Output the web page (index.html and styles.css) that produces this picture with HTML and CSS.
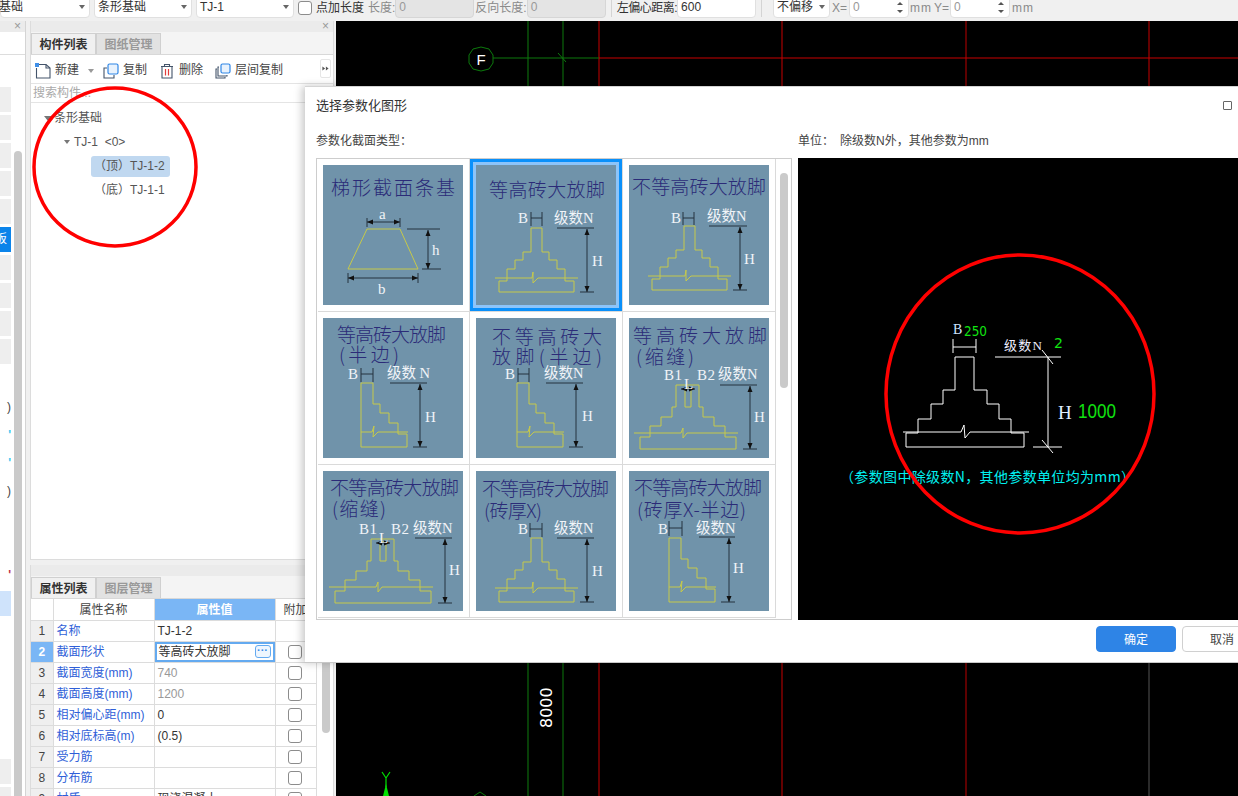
FILE: index.html
```html
<!DOCTYPE html>
<html lang="zh-CN">
<head>
<meta charset="utf-8">
<title>选择参数化图形</title>
<link rel="stylesheet" href="styles.css">
</head>
<body>
<svg class="defs" aria-hidden="true">
  <defs>
    <marker id="ar" viewBox="0 0 6 6" refX="6" refY="3" markerWidth="6" markerHeight="6" orient="auto-start-reverse"><path d="M0 0.5L6 3L0 5.5Z" fill="#111"/></marker>
    <g id="foot"><path d="M55 63H66V87H73V95H81V104H89V116H98V127H23V116H31V104H39V95H47V87H55Z"/><path d="M19 113H56L57 107L57 118L62 113H102"/></g>
    <g id="half"><path d="M38 65H50V86H57V95H66V105H75V116H84V129H38Z"/><path d="M38 114H49L51 108L50 119L55 114H85"/></g>
    <g id="slot"><path d="M47 67H70V89H74V99H85V108H96V119H107V131H11V119H21V108H32V99H43V89H47Z"/><path d="M56 70H62V89H56Z"/><path d="M5 115H52L54 110L54 120L58 115H109"/></g>
  </defs>
</svg>

<div class="app">
  <header class="topbar">
    <div class="ctl sel w90 flush"><span class="clipL">基础</span><i class="caret"></i></div>
    <div class="ctl sel w98"><span>条形基础</span><i class="caret"></i></div>
    <div class="ctl sel w98"><span>TJ-1</span><i class="caret"></i></div>
    <span class="check"></span>
    <span class="lbl m4">点加长度</span>
    <span class="lbl dim m4">长度:</span>
    <div class="ctl off w79 m0">0</div>
    <span class="lbl dim m1">反向长度:</span>
    <div class="ctl off w79 m0">0</div>
    <span class="sep"></span>
    <span class="lbl tight">左偏心距离:</span>
    <div class="ctl on w79 m0">600</div>
    <span class="sep"></span>
    <div class="ctl sel w57 m6"><span>不偏移</span><i class="caret"></i></div>
    <span class="lbl dim m2">X=</span>
    <div class="ctl num w60 m2"><span>0</span><b class="spin"><i class="up"></i><i class="down"></i></b></div>
    <span class="lbl dim m1 mm">mm</span>
    <span class="lbl dim m2">Y=</span>
    <div class="ctl num w60 m1"><span>0</span><b class="spin"><i class="up"></i><i class="down"></i></b></div>
    <span class="lbl dim m2 mm">mm</span>
  </header>

  <div class="main">
    <aside class="side">
      <div class="strip"><span class="close">×</span></div>
      <div class="side-top"></div>
      <div class="side-body">
        <ul class="side-list">
          <li class="g"></li><li class="g"></li><li class="g"></li><li class="g"></li><li class="g"></li>
          <li class="b">板</li>
          <li class="g"></li><li class="g"></li><li class="g"></li><li class="g"></li>
          <li></li><li>)</li><li class="c">'</li><li class="c">'</li><li>)</li><li></li><li></li>
          <li class="r">'</li><li class="s"></li>
          <li></li><li></li><li></li><li></li><li></li>
          <li class="g"></li><li class="g"></li>
        </ul>
        <div class="side-scroll"></div>
      </div>
    </aside>

    <div class="panels">
      <section class="panel list-panel">
        <div class="strip"><span class="close">×</span></div>
        <div class="tabs"><span class="tab on">构件列表</span><span class="tab">图纸管理</span></div>
        <div class="tools">
          <span class="tool first">
            <svg class="ico" viewBox="0 0 16 16"><path d="M4 1.5H11L15 5V15H1.5V5" class="ln"/><path d="M11 1.5V5H15" class="ln"/><rect x="0" y="0" width="4" height="4" fill="#3f8fe8"/></svg>
            新建<i class="caret small"></i>
          </span>
          <span class="tool">
            <svg class="ico" viewBox="0 0 16 16"><path d="M4 5H1V15H11V12" class="ln"/><rect x="5" y="1" width="10" height="10" rx="1.5" fill="#e8f2fd" stroke="#2f86e6" stroke-width="1.2"/></svg>
            复制
          </span>
          <span class="tool">
            <svg class="ico" viewBox="0 0 16 16"><path d="M2 3.5H14M5.5 3.5V1.5H10.500V3.500M3 3.5V15H13V3.5" class="ln"/><path d="M6.500 6V12.500M9.500 6V12.500" stroke="#e23b3b" stroke-width="1.200" fill="none"/></svg>
            删除
          </span>
          <span class="tool">
            <svg class="ico" viewBox="0 0 16 16"><path d="M2 6H1V15H10V14M4 4H3V13H12V12" class="ln"/><rect x="6" y="1" width="9" height="9" rx="1.500" fill="#e8f2fd" stroke="#2f86e6" stroke-width="1.200"/></svg>
            层间复制
          </span>
          <span class="more"><svg viewBox="0 0 9 6"><path d="M0.500 0.500L4 3L0.500 5.500ZM5 0.500L8.500 3L5 5.500Z" fill="#555"/></svg></span>
        </div>
        <div class="search">搜索构件...</div>
        <ul class="tree">
          <li class="lv0"><i class="tri"></i>条形基础</li>
          <li class="lv1"><i class="tri"></i>TJ-1&nbsp;&nbsp;&lt;0&gt;</li>
          <li class="lv2"><span class="node cur">（顶）TJ-1-2</span></li>
          <li class="lv2"><span class="node">（底）TJ-1-1</span></li>
        </ul>
      </section>

      <section class="panel prop-panel">
        <div class="strip"></div>
        <div class="tabs"><span class="tab on">属性列表</span><span class="tab">图层管理</span></div>
        <div class="prop-body">
          <table class="props">
            <colgroup><col class="c0"><col class="c1"><col class="c2"><col class="c3"></colgroup>
            <tr><th></th><th>属性名称</th><th class="hl">属性值</th><th>附加</th></tr>
            <tr><td class="n">1</td><td class="k">名称</td><td>TJ-1-2</td><td></td></tr>
            <tr><td class="n hl">2</td><td class="k">截面形状</td><td class="edit"><span>等高砖大放脚</span><em>···</em></td><td class="x"><span class="check"></span></td></tr>
            <tr><td class="n">3</td><td class="k">截面宽度(mm)</td><td class="g">740</td><td class="x"><span class="check"></span></td></tr>
            <tr><td class="n">4</td><td class="k">截面高度(mm)</td><td class="g">1200</td><td class="x"><span class="check"></span></td></tr>
            <tr><td class="n">5</td><td class="k">相对偏心距(mm)</td><td>0</td><td class="x"><span class="check"></span></td></tr>
            <tr><td class="n">6</td><td class="k">相对底标高(m)</td><td>(0.5)</td><td class="x"><span class="check"></span></td></tr>
            <tr><td class="n">7</td><td class="k">受力筋</td><td></td><td class="x"><span class="check"></span></td></tr>
            <tr><td class="n">8</td><td class="k">分布筋</td><td></td><td class="x"><span class="check"></span></td></tr>
            <tr><td class="n">9</td><td class="k">材质</td><td>现浇混凝土</td><td class="x"><span class="check"></span></td></tr>
          </table>
          <div class="prop-scroll"></div>
        </div>
      </section>
    </div>

    <div class="canvas">
      <svg class="cad" viewBox="0 0 902 775">
        <path class="dg" d="M192 0V775"/><path class="g2" d="M227 0V775"/>
        <path class="r1" d="M263 0V775M446 0V775M813 0V65"/><path class="r2" d="M630 0V775"/><path class="gy" d="M813 642V775"/>
        <path class="g2" d="M157 37H263M222 32L230 41"/><path class="r1" d="M263 37H902"/>
        <path class="circ" d="M145 26L153 28L157 34V42L153 48L145 50L137 48L133 42V34L137 28Z"/>
        <text class="f" x="145" y="44">F</text>
        <text class="dimtxt" transform="translate(216 707) rotate(-90)">8000</text>
        <path class="axis" d="M46 751L50 757L54 751M50 757V766"/><path class="axfill" d="M47 775L50 763L53 775Z"/>
        <path class="circ" d="M138 775L144 771L150 775"/>
      </svg>
    </div>
  </div>
</div>

<div class="dialog">
  <div class="dlg-title"><span>选择参数化图形</span><i class="max"></i></div>
  <div class="dlg-labels">
    <span class="lab1">参数化截面类型：</span>
    <span class="lab2">单位：</span><span>除级数N外，其他参数为mm</span>
  </div>
  <div class="dlg-body">
    <div class="gallery">
      <div class="cells">
        <div class="cell">
          <svg class="thumb" viewBox="0 0 140 140">
            <text class="tt" x="8" y="30" textLength="124">梯形截面条基</text>
            <path class="yl" d="M44 64H77L95 104H25Z"/>
            <path class="dm" d="M44 53V62M77 53V62M25 108V118M95 108V118M84 64H117M99 104H118"/>
            <path class="dm" d="M44 57H77" marker-start="url(#ar)" marker-end="url(#ar)"/>
            <path class="dm" d="M25 113H95" marker-start="url(#ar)" marker-end="url(#ar)"/>
            <path class="dm" d="M105 65V104" marker-start="url(#ar)" marker-end="url(#ar)"/>
            <text class="wl" x="56" y="54">a</text><text class="wl" x="109" y="90">h</text><text class="wl" x="55" y="129">b</text>
          </svg>
        </div>
        <div class="cell sel">
          <svg class="thumb" viewBox="0 0 140 140">
            <text class="tt" x="13" y="32" textLength="116">等高砖大放脚</text>
            <use href="#foot" class="yl"/>
            <path class="dm" d="M55 47V61M66 47V61M55 53H66M81 63H118M104 127H118"/>
            <path class="dm" d="M111 64V127" marker-start="url(#ar)" marker-end="url(#ar)"/>
            <text class="wl" x="42" y="58">B</text><text class="wl s" x="78" y="58">级数N</text><text class="wl" x="116" y="101">H</text>
          </svg>
        </div>
        <div class="cell">
          <svg class="thumb" viewBox="0 0 140 140">
            <text class="tt" x="3" y="29" textLength="134">不等高砖大放脚</text>
            <use href="#foot" class="yl" transform="translate(0 -2)"/>
            <path class="dm" d="M54 47V60M65 47V60M54 53H65M80 61H118M104 125H118"/>
            <path class="dm" d="M111 62V125" marker-start="url(#ar)" marker-end="url(#ar)"/>
            <text class="wl" x="42" y="58">B</text><text class="wl s" x="78" y="56">级数N</text><text class="wl" x="115" y="99">H</text>
          </svg>
        </div>
        <div class="cell">
          <svg class="thumb" viewBox="0 0 140 140">
            <text class="tt" x="14" y="24" textLength="109">等高砖大放脚</text>
            <text class="tt" x="16" y="44" textLength="60">(半边)</text>
            <use href="#half" class="yl"/>
            <path class="dm" d="M38 50V64M50 50V64M38 56H50M67 65H104M90 129H104"/>
            <path class="dm" d="M97 66V129" marker-start="url(#ar)" marker-end="url(#ar)"/>
            <text class="wl" x="25" y="61">B</text><text class="wl s" x="64" y="60">级数 N</text><text class="wl" x="102" y="104">H</text>
          </svg>
        </div>
        <div class="cell">
          <svg class="thumb" viewBox="0 0 140 140">
            <text class="tt" x="16" y="26" textLength="110">不等高砖大</text>
            <text class="tt" x="16" y="46" textLength="110">放脚(半边)</text>
            <use href="#half" class="yl" transform="translate(3 0)"/>
            <path class="dm" d="M42 50V64M53 50V64M42 56H53M70 65H107M93 129H107"/>
            <path class="dm" d="M100 66V129" marker-start="url(#ar)" marker-end="url(#ar)"/>
            <text class="wl" x="29" y="61">B</text><text class="wl s" x="68" y="60">级数N</text><text class="wl" x="106" y="103">H</text>
          </svg>
        </div>
        <div class="cell">
          <svg class="thumb" viewBox="0 0 140 140">
            <text class="tt" x="4" y="25" textLength="134">等高砖大放脚</text>
            <text class="tt" x="7" y="46" textLength="58">(缩缝)</text>
            <use href="#slot" class="yl"/>
            <path class="dm" d="M91 67H128M114 131H128"/>
            <path class="dm" d="M121 68V131" marker-start="url(#ar)" marker-end="url(#ar)"/>
            <path class="dm" d="M52 71H66" marker-start="url(#ar)" marker-end="url(#ar)"/>
            <text class="wl" x="35" y="62" textLength="18">B1</text><text class="wl" x="68" y="62" textLength="18">B2</text><text class="wl s" x="89" y="61">级数N</text><text class="wl" x="125" y="104">H</text><text class="wl" x="55" y="71">L</text>
          </svg>
        </div>
        <div class="cell">
          <svg class="thumb" viewBox="0 0 140 140">
            <text class="tt" x="7" y="24" textLength="129">不等高砖大放脚</text>
            <text class="tt" x="9" y="45" textLength="54">(缩缝)</text>
            <use href="#slot" class="yl" transform="translate(1 1)"/>
            <path class="dm" d="M92 67H129M115 132H129"/>
            <path class="dm" d="M122 68V132" marker-start="url(#ar)" marker-end="url(#ar)"/>
            <path class="dm" d="M53 72H67" marker-start="url(#ar)" marker-end="url(#ar)"/>
            <text class="wl" x="36" y="63" textLength="18">B1</text><text class="wl" x="68" y="63" textLength="18">B2</text><text class="wl s" x="90" y="62">级数N</text><text class="wl" x="126" y="104">H</text><text class="wl" x="56" y="72">L</text>
          </svg>
        </div>
        <div class="cell">
          <svg class="thumb" viewBox="0 0 140 140">
            <text class="tt" x="6" y="25" textLength="127">不等高砖大放脚</text>
            <text class="tt" x="8" y="47" textLength="58">(砖厚X)</text>
            <use href="#foot" class="yl" transform="translate(0 4)"/>
            <path class="dm" d="M54 52V66M66 52V66M54 58H66M81 67H118M104 131H118"/>
            <path class="dm" d="M111 68V131" marker-start="url(#ar)" marker-end="url(#ar)"/>
            <text class="wl" x="42" y="63">B</text><text class="wl s" x="78" y="62">级数N</text><text class="wl" x="116" y="105">H</text>
          </svg>
        </div>
        <div class="cell">
          <svg class="thumb" viewBox="0 0 140 140">
            <text class="tt" x="5" y="24" textLength="128">不等高砖大放脚</text>
            <text class="tt" x="8" y="46" textLength="109">(砖厚X-半边)</text>
            <use href="#half" class="yl" transform="translate(2 2)"/>
            <path class="dm" d="M40 50V65M53 50V65M40 57H53M70 66H106M92 131H106"/>
            <path class="dm" d="M100 67V131" marker-start="url(#ar)" marker-end="url(#ar)"/>
            <text class="wl" x="29" y="63">B</text><text class="wl s" x="67" y="62">级数N</text><text class="wl" x="104" y="102">H</text>
          </svg>
        </div>
      </div>
      <div class="gal-track"><div class="gal-thumb"></div></div>
    </div>
    <div class="preview">
      <svg class="prev" viewBox="0 0 440 462">
        <path class="wh" d="M157 199H176V232H189V246H201V261H213V275H226V289H108V275H120V261H133V246H145V232H157Z"/>
        <path class="wh" d="M105 274H163L166 267L167 280L172 274H231"/>
        <path class="wh" d="M155 189H178M155 181V195M178 181V195M197 199H263M250 199V289M235 289H264M244 192L255 206M244 282L255 295"/>
        <text class="pb" x="155" y="176">B</text><text class="pg" x="166" y="178" textLength="23" lengthAdjust="spacingAndGlyphs">250</text>
        <text class="pw" x="206" y="192" textLength="38">级数N</text><text class="pg" x="256" y="190">2</text>
        <text class="ph" x="260" y="261">H</text><text class="pl" x="280" y="260" textLength="38" lengthAdjust="spacingAndGlyphs">1000</text>
        <text class="pc" x="42" y="324" textLength="295">（参数图中除级数N，其他参数单位均为mm）</text>
      </svg>
    </div>
  </div>
  <div class="dlg-foot"><button class="btn pri">确定</button><button class="btn">取消</button></div>
</div>

<svg class="marks" viewBox="0 0 1238 796" aria-hidden="true">
  <ellipse cx="115" cy="167" rx="81" ry="79"/>
  <ellipse cx="1020" cy="394" rx="134" ry="139"/>
</svg>
</body>
</html>
```

FILE: styles.css
```css
* { box-sizing: border-box; }
html, body { margin: 0; height: 100%; }
body {
  position: relative;
  width: 1238px;
  height: 796px;
  overflow: hidden;
  background: #f0f0f0;
  color: #333;
  font: 12px/1.2 "Liberation Sans", "Noto Sans CJK SC", sans-serif;
}
ul { list-style: none; margin: 0; padding: 0; }
i, em { font-style: normal; }
.defs { position: absolute; width: 0; height: 0; }
.app { display: flex; flex-direction: column; height: 796px; }

/* top option bar */
.topbar { display: flex; align-items: flex-start; height: 21px; flex: none; overflow: hidden; white-space: nowrap; }
.ctl {
  display: flex; align-items: center; justify-content: space-between;
  height: 24px; margin-top: -6px; margin-left: 4px; padding: 2px 4px 0 3px;
  background: #fff; border: 1px solid #e0e0e0; border-radius: 4px; flex: none;
}
.flush { margin-left: 0; }
.w90 { width: 90px; } .w98 { width: 98px; } .w79 { width: 79px; } .w57 { width: 57px; } .w60 { width: 60px; }
.m0 { margin-left: 0; } .m1 { margin-left: 1px; } .m2 { margin-left: 2px; } .m4 { margin-left: 4px; } .m6 { margin-left: 6px; }
.clipL { margin-left: -5px; }
.off { background: #e4e4e4; border-color: #d6d6d6; color: #999; justify-content: flex-start; }
.on { justify-content: flex-start; }
.num { color: #999; }
.caret { width: 0; height: 0; border: 3px solid transparent; border-top: 4px solid #666; border-bottom: 0; }
.caret.small { margin-left: 5px; border-top-color: #999; }
.topbar > .check { margin: 1px 0 0 4px; }
.lbl { line-height: 16px; flex: none; }
.tight { letter-spacing: -.5px; }
.mm { width: 22px; letter-spacing: 1px; }
.dim { color: #8a8a8a; }
.sep { width: 1px; height: 17px; margin: 0 5px; background: #d4d4d4; flex: none; }
.spin { display: flex; flex-direction: column; gap: 5px; margin-right: 1px; }
.up, .down { display: block; width: 0; height: 0; border: 3px solid transparent; }
.up { border-bottom: 3px solid #555; border-top: 0; }
.down { border-top: 3px solid #555; border-bottom: 0; }
.check { display: inline-block; width: 14px; height: 14px; background: #fff; border: 1px solid #8c8c8c; border-radius: 3px; }

/* main row */
.main { display: flex; flex: 1; min-height: 0; }
.strip { display: flex; justify-content: flex-end; align-items: center; height: 11px; background: #ebebeb; flex: none; }
.close { margin-right: 4px; color: #999; font-size: 12px; line-height: 11px; }

.side { width: 26px; margin-right: 4px; display: flex; flex-direction: column; background: #fff; border-right: 1px solid #d4d4d4; flex: none; }
.side-top { height: 23px; border-bottom: 1px solid #ddd; flex: none; }
.side-body { display: flex; flex: 1; min-height: 0; overflow: hidden; }
.side-list { width: 11px; padding-top: 32px; flex: none; overflow: hidden; }
.side-list li { height: 25px; margin-bottom: 3px; line-height: 25px; text-align: right; font-size: 12px; white-space: nowrap; color: #444; }
.side-list .g { background: #eee; }
.side-list .b { background: #0b84ea; color: #fff; direction: rtl; text-align: start; text-indent: 4px; overflow: hidden; }
.side-list .c { color: #3cc8f0; font-weight: bold; }
.side-list .r { color: #c03048; font-weight: bold; }
.side-list .s { background: #cfe3fb; }
.side-scroll { width: 8px; margin: 96px 0 0 3px; background: #cacaca; border-radius: 4px 4px 0 0; flex: none; }

.panels { display: flex; flex-direction: column; gap: 5px; width: 304px; flex: none; }
.panel { display: flex; flex-direction: column; background: #fff; border: 1px solid #dcdcdc; border-width: 0 1px 1px 1px; }
.list-panel { height: 539px; flex: none; }
.prop-panel { flex: 1; min-height: 0; border-bottom: 0; overflow: hidden; }
.tabs { display: flex; height: 23px; padding-top: 1px; background: #f4f4f4; border-bottom: 1px solid #d8d8d8; flex: none; }
.tab { width: 65px; padding-top: 1px; line-height: 20px; text-align: center; color: #999; background: #e2e2e2; border: 1px solid #d0d0d0; border-bottom: 0; font-weight: bold; }
.tab.on { color: #333; background: #f0f0f0; }
.tools { position: relative; display: flex; align-items: center; gap: 12px; height: 29px; padding: 3px 0 0 4px; border-bottom: 1px solid #e4e4e4; flex: none; }
.tool { display: flex; align-items: center; gap: 4px; color: #444; }
.tool.first { margin-right: -3px; }
.ico { width: 16px; height: 16px; flex: none; }
.ln { fill: none; stroke: #44546a; stroke-width: 1.1; }
.more { position: absolute; right: 2px; top: 4px; display: flex; align-items: center; justify-content: center; width: 11px; height: 19px; background: #fff; border: 1px solid #e6e6e6; border-radius: 2px; }
.more svg { width: 7px; height: 5px; }
.search { height: 19px; padding-left: 2px; line-height: 19px; color: #aaa; border-bottom: 1px solid #e4e4e4; flex: none; }
.tree { padding-top: 3px; color: #555; }
.tree li { display: flex; align-items: center; height: 24px; }
.lv0 { padding-left: 13px; } .lv1 { padding-left: 33px; } .lv2 { padding-left: 60px; }
.tri { width: 0; height: 0; margin-right: 2px; border: 4px solid transparent; border-top: 5px solid #777; border-bottom: 0; }
.lv1 .tri { margin-right: 4px; border-width: 4px 3.5px 0; }
.node { display: block; width: 79px; height: 21px; padding-left: 3px; line-height: 21px; border-radius: 3px; white-space: nowrap; }
.node.cur { background: #c0d8f0; }

.prop-body { display: flex; flex: 1; min-height: 0; }
.props { width: 285px; border-collapse: collapse; table-layout: fixed; flex: none; align-self: flex-start; }
.c0 { width: 22px; } .c1 { width: 101px; } .c2 { width: 121px; } .c3 { width: 41px; }
.props th, .props td { height: 21px; padding: 1px 3px 0; border: 1px solid #dcdcdc; font-weight: normal; white-space: nowrap; overflow: hidden; }
.props th { text-align: center; color: #444; background: #fff; }
.props .hl { background: #7ab6f5; color: #fff; font-weight: bold; }
.props tr > :first-child { border-left: 0; }
.props tr:first-child > * { border-top: 0; }
.props .n { padding: 1px 0 0; text-align: center; background: #efefef; color: #444; }
.props .n.hl { background: #7ab6f5; color: #fff; }
.props .k { color: #2f5fd8; }
.props .g { color: #999; }
.props .x { padding: 0 2px 0 0; text-align: center; }
.props .x .check { vertical-align: middle; }
.props .edit { box-shadow: inset 0 0 0 2px #64aaf0; padding: 1px 4px 0; }
.edit span { float: left; line-height: 19px; }
.edit em { float: right; width: 16px; height: 13px; margin-top: 2px; border: 1px solid #64aaf0; border-radius: 3px; background: #eef6fe; color: #3f8fe8; font-size: 11px; font-weight: bold; line-height: 9px; text-align: center; }
.prop-scroll { width: 8px; height: 130px; margin: 4px 0 0 5px; background: #cacaca; border-radius: 4px; flex: none; }

/* CAD canvas */
.canvas { flex: 1; min-width: 0; margin-left: 2px; background: #000; }
.cad { display: block; width: 902px; height: 775px; }
.cad path { fill: none; }
.dg { stroke: #0b5a0b; stroke-width: 1.4; }
.g2 { stroke: #0d780d; stroke-width: 1; }
.r1 { stroke: #c80000; stroke-width: 1; }
.r2 { stroke: #7c0000; stroke-width: 1.500; }
.gy { stroke: #555; stroke-width: 1; }
.circ { stroke: #0c7a0c; stroke-width: 1; }
.f { fill: #fff; font-size: 15px; text-anchor: middle; }
.dimtxt { fill: #fff; font-size: 16px; font-family: "DejaVu Sans", sans-serif; letter-spacing: 0; }
.cad .axis { stroke: #00e000; stroke-width: 1.2; }
.cad .axfill { fill: #00e000; }

/* dialog */
.dialog {
  position: absolute; left: 305px; top: 86px; width: 960px; height: 577px;
  display: flex; flex-direction: column; padding: 0 0 0 11px;
  background: #fff; border-top: 1px solid #d4d4d4; border-bottom: 1px solid #c8c8c8;
  box-shadow: -3px 0 8px rgba(0, 0, 0, .22);
}
.dlg-title { display: flex; align-items: center; justify-content: space-between; height: 38px; padding: 0 33px 1px 0; font-size: 13px; color: #333; flex: none; }
.max { width: 9px; height: 9px; border: 1px solid #666; border-radius: 1px; }
.dlg-labels { display: flex; align-items: center; height: 33px; flex: none; color: #444; }
.lab1 { width: 482px; }
.lab2 { width: 42px; }
.dlg-body { display: flex; gap: 6px; flex: none; }
.gallery { display: flex; width: 476px; height: 462px; border: 1px solid #cdcdcd; padding-left: 1px; flex: none; }
.cells { display: grid; grid-template-columns: 152px 153px 153px; grid-template-rows: repeat(3, 153px); flex: none; }
.cell { padding: 6px 0 0 6px; border-right: 1px solid #dadada; border-bottom: 1px solid #dadada; }
.cell:nth-child(3n+1) { padding-left: 5px; }
.thumb { display: block; width: 140px; height: 140px; background: #7093aa; }
.cell.sel .thumb { box-shadow: 0 0 0 3px #8cc4fa, 0 0 0 6px #0a90fa; }
.tt { fill: #2b2b78; font-size: 19px; font-family: "Noto Sans CJK SC", sans-serif; font-weight: 300; }
.yl { fill: none; stroke: #c6c94a; stroke-width: 1; }
.yl path { fill: none; }
.dm { fill: none; stroke: #25333f; stroke-width: 1; }
.wl { fill: #f0f4f8; font-size: 15px; font-family: "Liberation Serif", "Noto Sans CJK SC", serif; }
.wl.s { font-size: 14.500px; }
.gal-track { padding: 14px 0 0 4px; flex: none; }
.gal-thumb { width: 8px; height: 215px; background: #cacaca; border-radius: 4px; }
.preview { width: 440px; height: 462px; background: #000; flex: none; }
.prev { display: block; width: 440px; height: 462px; }
.wh { fill: none; stroke: #fff; stroke-width: 1; }
.pb { fill: #cfe6ff; font: 14px "Liberation Serif", serif; }
.pg { fill: #11e511; font: 14px "DejaVu Sans", sans-serif; }
.pw { fill: #eef; font: 13px "Liberation Serif", "Noto Sans CJK SC", serif; }
.ph { fill: #dfeeff; font: 19px "Liberation Serif", serif; }
.pl { fill: #10e010; font: 21px "Liberation Sans", sans-serif; }
.pc { fill: #00f0f0; font: 14px "Noto Sans CJK SC", sans-serif; }
.dlg-foot { display: flex; gap: 6px; padding: 6px 0 0 780px; flex: none; }
.btn { width: 80px; height: 26px; padding: 2px 0 0; background: #fff; color: #444; border: 1px solid #d0d0d0; border-radius: 4px; font: inherit; }
.btn.pri { background: #2e84e6; border-color: #2e84e6; color: #fff; }

/* hand-drawn red annotations lie over everything */
.marks { position: absolute; left: 0; top: 0; width: 1238px; height: 796px; pointer-events: none; }
.marks ellipse { fill: none; stroke: #f00; stroke-width: 3.5; }
```
